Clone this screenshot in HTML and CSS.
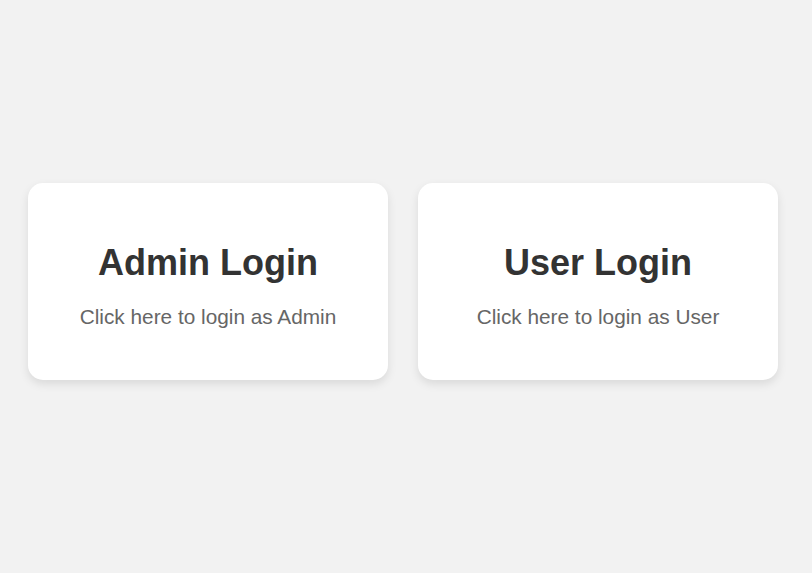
FILE: index.html
```html
<!DOCTYPE html>
<html lang="en">
<head>
<meta charset="utf-8">
<title>Login</title>
<link rel="stylesheet" href="styles.css">
</head>
<body>
<main class="page">
  <div class="cards">
    <a class="card" href="#">
      <h1 class="card-title">Admin Login</h1>
      <p class="card-text">Click here to login as Admin</p>
    </a>
    <a class="card" href="#">
      <h1 class="card-title">User Login</h1>
      <p class="card-text">Click here to login as User</p>
    </a>
  </div>
</main>
</body>
</html>
```
FILE: styles.css
```css
html, body {
  margin: 0;
  padding: 0;
}
body {
  background: #f2f2f2;
  font-family: "Liberation Sans", Arial, sans-serif;
}
.page {
  box-sizing: border-box;
  min-height: 573px;
  display: flex;
  align-items: center;
  justify-content: center;
  padding: 0 6px 10px 0;
}
.cards {
  display: flex;
  gap: 30px;
}
.card {
  display: block;
  width: 300px;
  padding: 30px;
  background: #ffffff;
  border-radius: 15px;
  box-shadow: 0 4px 10px rgba(0, 0, 0, 0.1);
  text-align: center;
  text-decoration: none;
}
.card-title {
  margin: 29px 0 21px;
  font-size: 36px;
  font-weight: bold;
  color: #333333;
}
.card-text {
  margin: 20.8px 0;
  font-size: 20.8px;
  color: #666666;
}
```
